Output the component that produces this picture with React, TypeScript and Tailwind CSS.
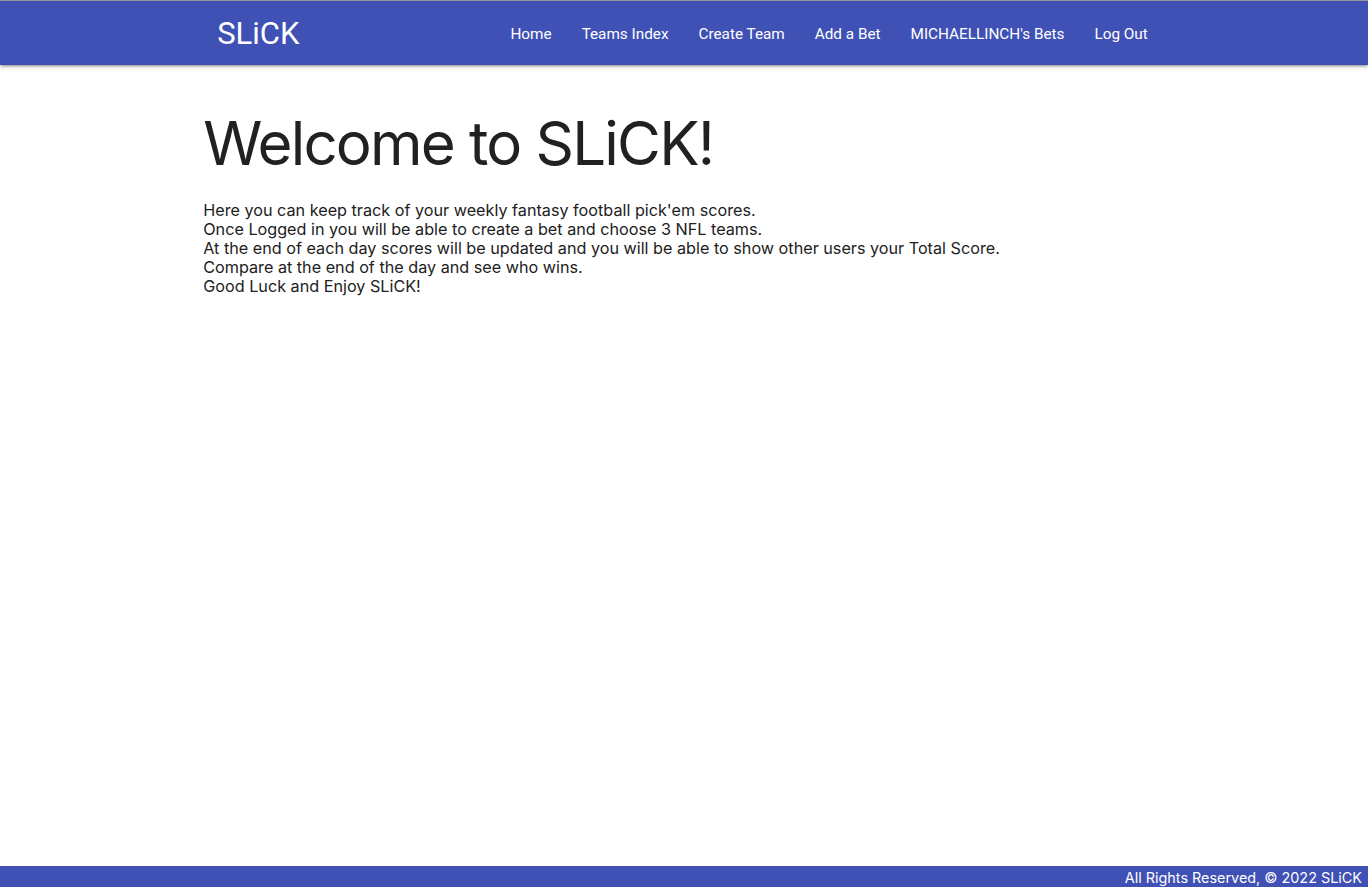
export default function App() {
  const links = ["Home", "Teams Index", "Create Team", "Add a Bet", "MICHAELLINCH's Bets", "Log Out"];
  return (
    <div className="h-[887px] flex flex-col bg-white overflow-hidden" style={{ fontFamily: 'Inter, "Liberation Sans", Arial, sans-serif' }}>
      <div className="h-px bg-[#9e9e9e]" />
      <nav className="h-16 bg-[#3f51b5] text-white shadow-[0_2px_2px_0_rgba(0,0,0,0.14),0_3px_1px_-2px_rgba(0,0,0,0.12),0_1px_5px_0_rgba(0,0,0,0.2)] relative z-10" style={{ fontFamily: 'Roboto, sans-serif' }}>
        <div className="w-[70%] mx-auto h-full flex items-center justify-between">
          <a className="text-[31px] leading-none pl-3">SLiCK</a>
          <ul className="flex h-full items-center pt-[2px]">
            {links.map((l) => (
              <li key={l} className="px-[15px] text-[15.3px]">{l}</li>
            ))}
          </ul>
        </div>
      </nav>
      <main className="flex-1">
        <div className="w-[70%] mx-auto text-[#212121]">
          <div className="-ml-0.5">
            <h1 className="text-[60px] leading-[66px] tracking-[-0.03em] mt-[44.5px] mb-[25px]">Welcome to SLiCK!</h1>
            <p className="text-[16.2px] leading-[19px]">
              Here you can keep track of your weekly fantasy football pick'em scores.<br />
              Once Logged in you will be able to create a bet and choose 3 NFL teams.<br />
              At the end of each day scores will be updated and you will be able to show other users your Total Score.<br />
              Compare at the end of the day and see who wins.<br />
              Good Luck and Enjoy SLiCK!
            </p>
          </div>
        </div>
      </main>
      <footer className="h-[21px] shrink-0 bg-[#3f51b5] text-white text-right text-[14.4px] leading-[24px] pr-1.5 overflow-hidden">
        All Rights Reserved, © 2022 SLiCK
      </footer>
    </div>
  );
}
